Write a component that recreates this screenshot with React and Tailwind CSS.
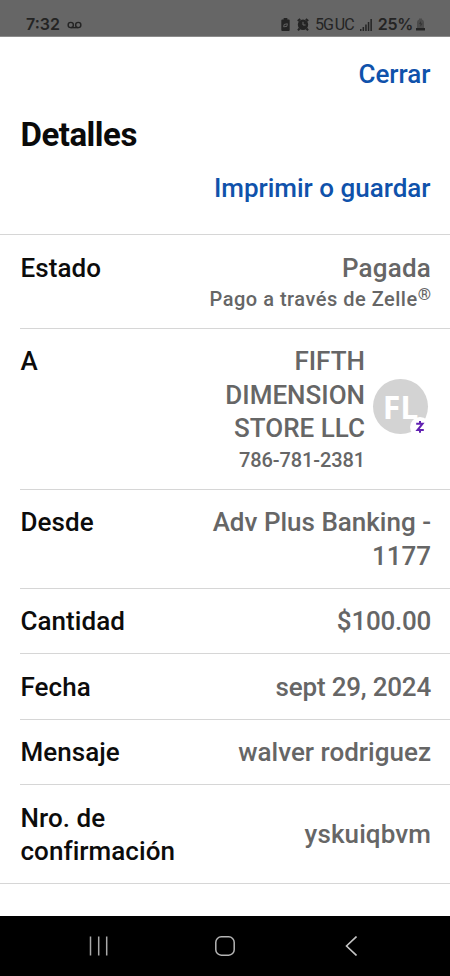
import clsx from "clsx";

const rows = [
  { label: "Cantidad", value: "$100.00", valueClass: "tracking-[-0.25px]" },
  { label: "Fecha", value: "sept 29, 2024", valueClass: "tracking-[-0.2px]" },
  { label: "Mensaje", value: "walver rodriguez", valueClass: "tracking-[0.02px]" },
];

function StatusBar() {
  return (
    <header className="flex h-9 shrink-0 items-end justify-between bg-[#666] pr-[25px] pb-[2px] pl-[26px] text-[#242424]">
      <div className="flex items-center gap-[7px]">
        <span className="font-['Inter'] text-[16px] leading-[19px] font-semibold">7:32</span>
        <svg width="15" height="8" viewBox="0 0 16 8" fill="none" stroke="currentColor" strokeWidth="1.5">
          <circle cx="4" cy="4" r="2.8" />
          <circle cx="12" cy="4" r="2.8" />
          <path d="M4 6.8h8" />
        </svg>
      </div>
      <div className="flex items-center">
        <svg width="9" height="13" viewBox="0 0 9 14">
          <path d="M2.5 0h4v1.5H8a1 1 0 0 1 1 1V13a1 1 0 0 1-1 1H1a1 1 0 0 1-1-1V2.5a1 1 0 0 1 1-1h1.5z" fill="currentColor" />
          <path d="M2.5 9.5 3 7l3.500-.8L6 9z" fill="none" stroke="#666" strokeWidth="1" />
        </svg>
        <svg className="ml-[7px]" width="12" height="13" viewBox="0 0 12 13">
          <circle cx="6" cy="6.700" r="5.200" fill="currentColor" />
          <path d="M.8 3 3.200.9M11.200 3 8.800.9M2.500 10.500 1 12.300M9.500 10.500l1.500 1.800" stroke="currentColor" strokeWidth="2" />
          <path d="M6 3.800v3.200h2.600" fill="none" stroke="#666" strokeWidth="1" />
        </svg>
        <span className="ml-[6px] font-['Roboto'] text-[16px] leading-[19px] tracking-[-1px]">5G</span>
        <span className="ml-[2px] font-['Roboto'] text-[16px] leading-[19px] tracking-[-0.9px]">UC</span>
        <svg className="ml-[6px]" width="12" height="12" viewBox="0 0 12 12" fill="currentColor">
          <path d="M0 10h1.500v2H0zM2.600 8h1.500v4H2.600zM5.200 5.500h1.500V12H5.200zM7.800 3h1.500v9H7.800zM10.400 0h1.500v12h-1.500z" />
        </svg>
        <span className="ml-[6px] font-['Inter'] text-[16px] leading-[19px] font-semibold tracking-[-0.3px]">25%</span>
        <svg className="ml-[3px]" width="9" height="13" viewBox="0 0 9 13">
          <path d="M1 10V4a3 3 0 0 1 2-2.500V.5h3v1A3 3 0 0 1 8 4v6z" fill="#4b4b4b" />
          <path d="M5 3 3 6h1.500v2.500L6.500 5.500H5z" fill="#333" />
          <path d="M0 10h9v2.500H0z" fill="currentColor" />
        </svg>
      </div>
    </header>
  );
}

function Row({ label, children, last, center }) {
  return (
    <div className={clsx("shrink-0", !last && "pl-5")}>
      <div
        className={clsx(
          "flex justify-between border-b border-[#d6d6d6] pt-[16.5px] pr-[19px] pb-[14.5px] leading-[33.5px] font-medium",
          last ? "pl-[20.5px]" : "pl-[0.5px]",
          center && "items-center"
        )}
      >
        <div className="w-40 shrink-0 tracking-[0.05px] text-[#0c0c0c]">{label}</div>
        <div className="text-right text-[#666]">{children}</div>
      </div>
    </div>
  );
}

function Avatar() {
  return (
    <div className="relative -mt-[6px] flex size-[55px] shrink-0 items-center justify-center rounded-full bg-[#d3d3d3]">
      <span className="font-['Open_Sans'] text-[32px] leading-none font-bold text-white">FL</span>
      <span className="absolute right-[-2px] bottom-[-3px] flex size-[20px] items-center justify-center rounded-full bg-white">
        <svg width="10" height="14" viewBox="0 0 10 14" fill="none" stroke="#6222b2" strokeWidth="2">
          <path d="M1.200 3.800h6.300L2.500 10H8.800" />
          <path d="M5 1v2.800M5 10v2.800" />
        </svg>
      </span>
    </div>
  );
}

function NavBar() {
  return (
    <nav className="mt-auto flex h-[60px] shrink-0 items-center bg-black pl-[89px]">
      <svg width="19" height="20" viewBox="0 0 19 20" stroke="#a9a9a9" strokeWidth="1.500">
        <path d="M1.500.5v19M9.700.5v19M17.700.5v19" />
      </svg>
      <svg className="ml-[107px]" width="20" height="20" viewBox="0 0 20 20" fill="none" stroke="#b5b5b5" strokeWidth="1.500">
        <rect x=".8" y=".8" width="18.400" height="18.400" rx="5.500" />
      </svg>
      <svg className="ml-[110px]" width="12" height="20" viewBox="0 0 12 20" fill="none" stroke="#c4c4c4" strokeWidth="1.600">
        <path d="M11.500 .5 1.500 10l10 9.500" />
      </svg>
    </nav>
  );
}

export default function App() {
  return (
    <div className="flex h-[976px] w-[450px] flex-col overflow-hidden bg-white font-['Roboto',sans-serif] text-[26px]">
      <StatusBar />
      <div className="h-px shrink-0 bg-[#8b8b8b]" />

      <section className="flex h-[198px] shrink-0 flex-col border-b border-[#d6d6d6] pr-[19.5px] pl-[20.5px] font-medium text-[#0f52ab]">
        <button className="mt-[21px] self-end leading-[33px]">Cerrar</button>
        <h1 className="mt-[24px] text-[33px] leading-[40px] font-bold tracking-[-0.5px] text-[#0a0a0a]">Detalles</h1>
        <button className="mt-[17px] self-end leading-[33px]">Imprimir o guardar</button>
      </section>

      <Row label="Estado">
        <div className="tracking-[0.2px]">Pagada</div>
        <div className="text-[20px] leading-[28px] tracking-[0.5px] whitespace-nowrap">
          Pago a través de Zelle<sup className="top-[-6px] text-[17px] leading-none tracking-normal">®</sup>
        </div>
      </Row>
      <Row label="A">
        <div className="flex items-center gap-2 pr-[3px]">
          <div>
            <div className="w-[150px]">FIFTH DIMENSION STORE LLC</div>
            <div className="text-[20px] leading-[28.5px] tracking-[-0.1px]">786-781-2381</div>
          </div>
          <Avatar />
        </div>
      </Row>
      <Row label="Desde">
        <div className="w-[230px]">Adv Plus Banking - 1177</div>
      </Row>
      {rows.map((row) => (
        <Row key={row.label} label={row.label}>
          <div className={row.valueClass}>{row.value}</div>
        </Row>
      ))}
      <Row label="Nro. de confirmación" last center>
        <div className="tracking-[0.1px]">yskuiqbvm</div>
      </Row>

      <NavBar />
    </div>
  );
}
